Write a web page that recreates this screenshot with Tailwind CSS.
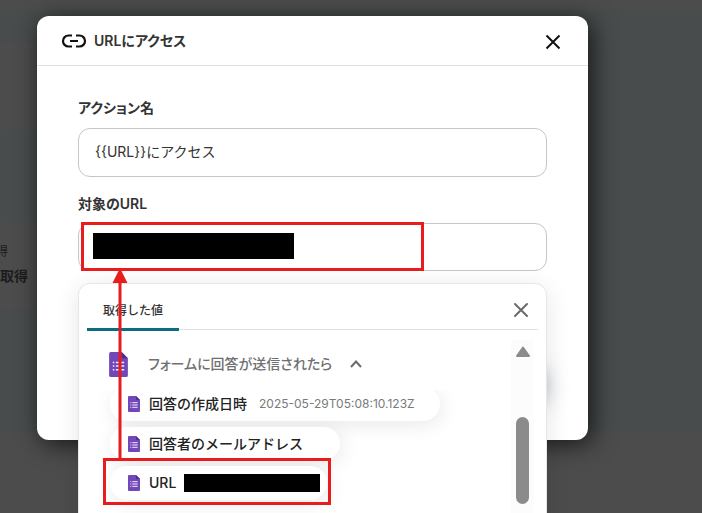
<!DOCTYPE html>
<html lang="ja">
<head>
    <meta charset="UTF-8">
    <meta name="viewport" content="width=device-width, initial-scale=1.0">
    <title>URLにアクセス</title>
    <script src="https://cdn.jsdelivr.net/npm/@tailwindcss/browser@4"></script>
    <style>
        body {
            font-family: Inter, 'Noto Sans CJK JP', sans-serif;
        }
        h1, label, .trigger {
            font-feature-settings: 'palt';
        }
    </style>
</head>
<body class="bg-[#4d4c4c] text-[#333333]">
    <svg class="hidden">
        <symbol id="form-icon" viewBox="0 0 18 24">
            <path d="M1.500 0h10.500l6 6v16.500a1.500 1.500 0 0 1-1.500 1.500h-15a1.500 1.500 0 0 1-1.500-1.500v-21a1.500 1.500 0 0 1 1.500-1.500z" fill="#7248b9"/>
            <path d="M12 0l6 6h-4.500a1.500 1.500 0 0 1-1.500-1.500z" fill="#4f2f8c"/>
            <path d="M6.500 10h8M6.500 13.500h8M6.500 17h8" stroke="#f1e9ff" stroke-width="1.500"/>
            <path d="M3.500 10h1.500M3.500 13.500h1.500M3.500 17h1.500" stroke="#f1e9ff" stroke-width="1.500"/>
        </symbol>
    </svg>

    <div class="relative h-screen overflow-hidden">
        <!-- Workflow canvas, dimmed by the overlay -->
        <div class="flex h-full flex-col pt-[9px] pb-[81px]">
            <div class="flex flex-1 flex-col gap-[92px] bg-[#484c4c] pt-[34px]">
                <div class="h-[87px] w-1/4 bg-[#4d4c4c]"></div>
                <div class="flex h-[87px] w-1/4 flex-col gap-1 bg-[#4d4c4c] pt-5 text-[#1c1c1c]">
                    <p class="flex w-2 justify-end overflow-hidden text-xs leading-5">得</p>
                    <p class="flex w-7 justify-end text-sm leading-5 font-semibold">取得</p>
                </div>
            </div>
        </div>

        <!-- Modal -->
        <div class="absolute inset-0 pt-4 pr-[114px] pl-[37px]">
            <div role="dialog" aria-labelledby="dialog-title" class="rounded-xl bg-white shadow-[4px_4px_24px_rgba(0,0,0,0.7)]">
                <header class="flex h-[50px] items-center border-b border-[#e2e2e2] px-6">
                    <svg class="h-6 w-[26px]" viewBox="0 0 26 24" fill="none" stroke="#111111" stroke-width="2.200">
                        <path d="M11 6.500H7.500a5.500 5.500 0 0 0 0 11H11M15 6.500h3.500a5.500 5.500 0 0 1 0 11H15M9 12h8"/>
                    </svg>
                    <h1 id="dialog-title" class="ml-[7px] flex-1 text-sm font-semibold">URLにアクセス</h1>
                    <button type="button" aria-label="閉じる" class="-mr-px flex size-6 items-center justify-center">
                        <svg class="size-6" viewBox="0 0 24 24" fill="none" stroke="#111111" stroke-width="2">
                            <path d="M5.500 6.500l13 13M18.500 6.500l-13 13"/>
                        </svg>
                    </button>
                </header>

                <form class="relative px-[41px] pt-8 pb-[169px]">
                    <div class="absolute right-11 bottom-10 h-8 w-20 rounded-xl bg-[#0d6b7f] shadow-[0_2px_22px_rgba(30,60,80,0.5)]"></div>

                    <label for="action-name" class="block text-sm leading-5 font-semibold">アクション名</label>
                    <input id="action-name" type="text" value="{{URL}}にアクセス" class="mt-[10px] block h-[49px] w-full rounded-xl border border-[#c6c6c6] px-4 pb-[3px] text-sm outline-none">

                    <label for="target-url" class="mt-[17px] block text-sm leading-5 font-semibold">対象のURL</label>
                    <div class="relative mt-[9px]">
                        <input id="target-url" type="text" class="block h-12 w-full rounded-xl border border-[#c6c6c6] px-4 text-sm outline-none">
                        <div class="absolute top-[10px] left-[15px] h-[26px] w-[201px] bg-black"></div>

                        <!-- Value picker -->
                        <section class="absolute top-full left-0 mt-3 h-[260px] w-full rounded-xl border border-[#e6e6e6] bg-white px-2 shadow-[0_4px_24px_rgba(0,0,0,0.1)]">
                            <div class="flex h-[46px] items-center justify-between border-b border-[#e2e2e2]">
                                <button type="button" class="-mb-px h-[47px] border-b-3 border-[#0d6b7f] px-4 pt-[10px] text-xs font-medium">取得した値</button>
                                <button type="button" aria-label="値の一覧を閉じる" class="mt-[6px] mr-[5px] flex size-6 items-center justify-center">
                                    <svg class="size-6" viewBox="0 0 24 24" fill="none" stroke="#6b6b6b" stroke-width="2" stroke-linecap="round">
                                        <path d="M6 6l12 12M18 6l-12 12"/>
                                    </svg>
                                </button>
                            </div>
                            <div class="flex pt-[10px] pr-1">
                                <div class="flex-1 pt-2">
                                    <div class="flex h-[42px] items-start pt-[3px] pl-[22px]">
                                        <svg class="mt-px h-[25px] w-[19px]"><use href="#form-icon"/></svg>
                                        <button type="button" class="trigger mt-px ml-5 flex items-center gap-[18px] text-sm leading-6 font-medium text-[#707070]">
                                            フォームに回答が送信されたら
                                            <svg class="size-3" viewBox="0 0 12 12" fill="none" stroke="#6b6b6b" stroke-width="2">
                                                <path d="M1 9l5-5.500 5 5.500"/>
                                            </svg>
                                        </button>
                                    </div>
                                    <div class="h-[150px] overflow-hidden">
                                        <ul class="-mt-[3px] flex flex-col items-start gap-[6px] pl-[23px] text-sm font-medium text-[#222222]">
                                            <li class="flex h-[34px] items-center rounded-full bg-white pr-[25px] pl-[18px] shadow-[2px_4px_20px_rgba(0,0,0,0.09)]">
                                                <svg class="h-4 w-3"><use href="#form-icon"/></svg>
                                                <span class="ml-[9px]">回答の作成日時</span>
                                                <span class="ml-3 text-xs font-normal text-[#7a7a7a]">2025-05-29T05:08:10.123Z</span>
                                            </li>
                                            <li class="flex h-[33px] items-center rounded-full bg-white pr-[37px] pl-[18px] shadow-[2px_4px_20px_rgba(0,0,0,0.09)]">
                                                <svg class="h-4 w-3"><use href="#form-icon"/></svg>
                                                <span class="ml-[9px]">回答者のメールアドレス</span>
                                            </li>
                                            <li class="flex h-[34px] items-center rounded-full bg-white pr-[7px] pl-[18px] shadow-[2px_4px_20px_rgba(0,0,0,0.09)]">
                                                <svg class="h-4 w-3"><use href="#form-icon"/></svg>
                                                <span class="ml-[9px]">URL</span>
                                                <span class="ml-2 h-[18px] w-[136px] bg-black"></span>
                                            </li>
                                        </ul>
                                    </div>
                                </div>
                                <div class="flex w-[23px] flex-col items-center bg-[#fcfcfc] pt-[6px]">
                                    <svg class="h-3 w-4" viewBox="0 0 16 12" fill="#8b8b8b" stroke="#8b8b8b" stroke-width="2" stroke-linejoin="round">
                                        <path d="M8 1.500l6 8.500H2z"/>
                                    </svg>
                                    <div class="mt-[59px] h-[87px] w-[13px] rounded-full bg-[#8b8b8b]"></div>
                                </div>
                            </div>
                        </section>
                    </div>
                </form>
            </div>
        </div>

        <!-- Callouts -->
        <div class="absolute top-[222px] left-[81px] h-[49px] w-[343px] border-3 border-[#e81c1c]"></div>
        <div class="absolute top-[458px] left-[103px] h-[47px] w-[228px] border-3 border-[#e81c1c]"></div>
        <svg class="absolute top-[268px] left-[112px] h-[191px] w-4" viewBox="0 0 16 191" fill="#e81c1c">
            <path d="M8 0l7.500 15H9.500v176h-3V15H.5z"/>
        </svg>
    </div>
</body>
</html>
